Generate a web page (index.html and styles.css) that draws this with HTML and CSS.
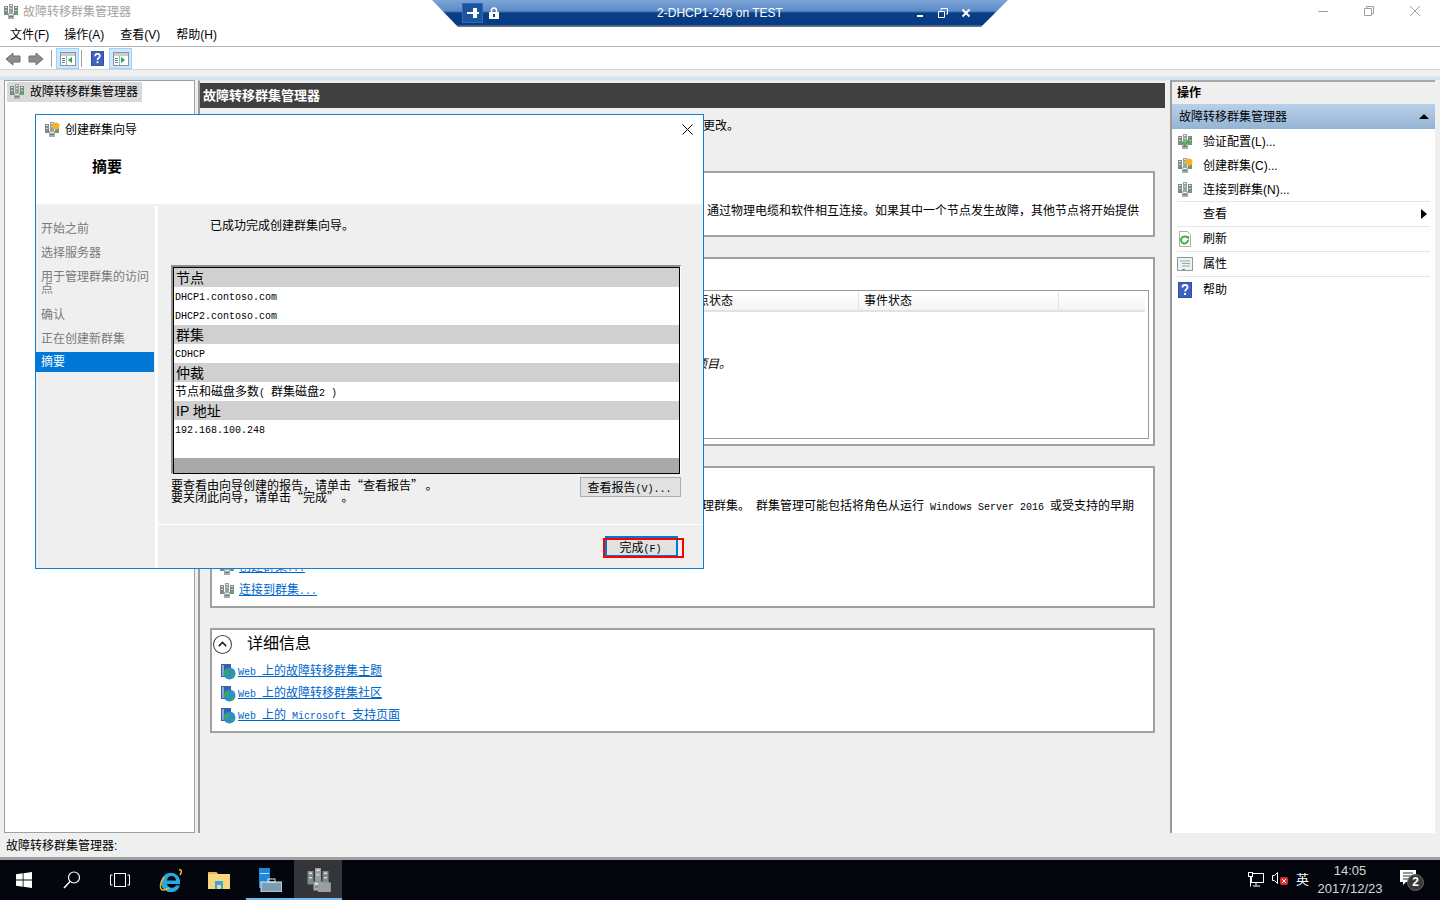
FILE: index.html
```html
<!DOCTYPE html>
<html lang="zh-CN">
<head>
<meta charset="utf-8">
<title>故障转移群集管理器</title>
<link rel="stylesheet" href="styles.css">
</head>
<body>
<svg class="defs" width="0" height="0">
  <symbol id="srv" viewBox="0 0 16 16">
    <rect x="1" y="2" width="4" height="9" fill="#7f8b88"/><rect x="6" y="0" width="4" height="9" fill="#97a29f"/><rect x="11" y="2" width="4" height="9" fill="#7f8b88"/>
    <rect x="2" y="3" width="2" height="1" fill="#dfe5e3"/><rect x="7" y="1" width="2" height="1" fill="#e8ecea"/><rect x="12" y="3" width="2" height="1" fill="#dfe5e3"/>
    <rect x="2" y="6" width="2" height="1" fill="#cfd6d3"/><rect x="7" y="4" width="2" height="1" fill="#cfd6d3"/><rect x="12" y="6" width="2" height="1" fill="#cfd6d3"/>
    <rect x="5" y="9" width="6" height="6" fill="#a5aead"/><rect x="6" y="10" width="4" height="1" fill="#e8ecea"/><rect x="6" y="12" width="4" height="1" fill="#6f7a78"/>
    <rect x="13" y="9" width="2" height="2" fill="#44c040"/><rect x="3" y="9" width="1" height="1" fill="#44c040"/>
  </symbol>
  <symbol id="globe" viewBox="0 0 16 16">
    <rect x="1" y="0" width="10" height="13" fill="#3a5fa8"/><rect x="2" y="1" width="2" height="11" fill="#8fa9d8"/>
    <circle cx="9.5" cy="9.5" r="6" fill="#2a8fd0"/><path d="M6 6c2-1 3 0 3 2s-2 2-3 3l-2-1c0-2 1-3 2-4zM11 11l3-1c0 2-1 4-3 5z" fill="#3cab3c"/>
  </symbol>
  <symbol id="help" viewBox="0 0 14 16">
    <rect x="0" y="0" width="14" height="16" fill="#2b4ea6"/><rect x="1" y="1" width="12" height="14" fill="#3f63bd"/>
    <path d="M4.500 5.500C4.500 3.800 5.600 3 7 3s2.500 .9 2.500 2.300c0 2-2.500 2.200-2.500 4.200" fill="none" stroke="#fff" stroke-width="1.800"/><rect x="6" y="11" width="2" height="2" fill="#fff"/>
  </symbol>
  <symbol id="pane" viewBox="0 0 16 14">
    <rect x=".5" y=".5" width="15" height="13" fill="#fff" stroke="#8a9499"/><rect x="1" y="1" width="14" height="3" fill="#c9d0d4"/>
    <rect x="2" y="6" width="3" height="1" fill="#5b7fa8"/><rect x="2" y="8" width="3" height="1" fill="#5b7fa8"/><rect x="2" y="10" width="3" height="1" fill="#5b7fa8"/><rect x="6" y="4" width="1" height="9" fill="#a8b2b8"/>
  </symbol>
</svg>

<header class="titlebar">
  <svg class="ico16"><use href="#srv"/></svg>
  <span class="app-title">故障转移群集管理器</span>
  <div class="win-controls">
    <svg width="12" height="12" viewBox="0 0 12 12"><path d="M1 6.500h10" stroke="#a0a0a0"/></svg>
    <svg width="12" height="12" viewBox="0 0 12 12"><path d="M3.500 3.500V1.500h7v7h-2M1.500 3.500h7v7h-7z" stroke="#a0a0a0" fill="none"/></svg>
    <svg width="12" height="12" viewBox="0 0 12 12"><path d="M1 1l10 10M11 1L1 11" stroke="#a0a0a0"/></svg>
  </div>
</header>

<div class="rdp-bar">
  <div class="rdp-left">
    <span class="rdp-pin"><svg width="12" height="10" viewBox="0 0 12 10"><path d="M0 5h7M7 1h2v8H7zM9 5h3" stroke="#fff" stroke-width="2" fill="none"/></svg></span>
    <svg width="10" height="12" viewBox="0 0 10 12"><path d="M2.500 6V3.500a2.500 2.500 0 0 1 5 0V6" stroke="#fff" stroke-width="1.500" fill="none"/><rect y="5" width="10" height="7" fill="#fff"/><rect x="4" y="7" width="2" height="3" fill="#0a3f86"/></svg>
  </div>
  <span class="rdp-name">2-DHCP1-246 on TEST</span>
  <div class="rdp-right">
    <svg width="10" height="10" viewBox="0 0 10 10"><rect x="2" y="7" width="6" height="2" fill="#fff"/></svg>
    <svg width="10" height="10" viewBox="0 0 10 10"><path d="M3 2.500V.5h6.500v5.500H8M.5 3.500h6v6h-6z" fill="none" stroke="#fff"/></svg>
    <svg width="10" height="10" viewBox="0 0 10 10"><path d="M1.500 1.500l7 7M8.500 1.500l-7 7" stroke="#fff" stroke-width="2"/></svg>
  </div>
</div>

<nav class="menubar">
  <span>文件(F)</span><span>操作(A)</span><span>查看(V)</span><span>帮助(H)</span>
</nav>

<div class="toolbar">
  <svg class="tool-arrow" viewBox="0 0 16 14"><path d="M1 7l7-6v3h7v6H8v3z" fill="#8d8d8d" stroke="#6f6f6f"/></svg>
  <svg class="tool-arrow" viewBox="0 0 16 14"><path d="M15 7L8 1v3H1v6h7v3z" fill="#8d8d8d" stroke="#6f6f6f"/></svg>
  <i class="tool-sep"></i>
  <span class="tool-btn"><svg width="16" height="14"><use href="#pane"/><path d="M12 5v6l-4-3z" fill="#1fae3a"/></svg></span>
  <i class="tool-sep"></i>
  <svg class="tool-help"><use href="#help"/></svg>
  <span class="tool-btn"><svg width="16" height="14"><use href="#pane"/><path d="M8 5v6l4-3z" fill="#1fae3a"/></svg></span>
</div>
<div class="strip"></div>

<main class="workspace">
  <aside class="tree">
    <div class="tree-item"><svg class="ico16"><use href="#srv"/></svg><span>故障转移群集管理器</span></div>
  </aside>

  <section class="center">
    <h1 class="center-head">故障转移群集管理器</h1>
    <div class="center-body">
      <p class="intro">更改。</p>
      <div class="box box-1"><p class="b1-text">通过物理电缆和软件相互连接。如果其中一个节点发生故障，其他节点将开始提供</p></div>
      <div class="box box-2">
        <div class="table">
          <div class="thead">
            <span class="th th-a">节点状态</span>
            <span class="th th-b">事件状态</span>
            <span class="th th-c"></span>
          </div>
          <p class="empty">项目。</p>
        </div>
      </div>
      <div class="box box-3">
        <p class="b3-text">理群集。&ensp;群集管理可能包括将角色从运行<span class="mono"> Windows Server 2016 </span>或受支持的早期</p>
        <div class="actions">
          <a class="link-row"><svg class="ico16"><use href="#srv"/></svg><span class="link">创建群集<span class="mono">...</span></span></a>
          <a class="link-row"><svg class="ico16"><use href="#srv"/></svg><span class="link">连接到群集<span class="mono">...</span></span></a>
        </div>
      </div>
      <div class="box box-4">
        <div class="box-head">
          <svg width="19" height="19" viewBox="0 0 18 18"><circle cx="9" cy="9" r="8.500" fill="#fff" stroke="#444"/><path d="M5.500 10.500L9 7l3.500 3.500" fill="none" stroke="#222" stroke-width="1.500"/></svg>
          <span>详细信息</span>
        </div>
        <a class="web-row"><svg class="ico16"><use href="#globe"/></svg><span class="link"><span class="mono">Web </span>上的故障转移群集主题</span></a>
        <a class="web-row"><svg class="ico16"><use href="#globe"/></svg><span class="link"><span class="mono">Web </span>上的故障转移群集社区</span></a>
        <a class="web-row"><svg class="ico16"><use href="#globe"/></svg><span class="link"><span class="mono">Web </span>上的<span class="mono"> Microsoft </span>支持页面</span></a>
      </div>
    </div>
  </section>

  <aside class="actions-pane">
    <div class="ap-title">操作</div>
    <div class="ap-group"><span>故障转移群集管理器</span><svg width="10" height="5" viewBox="0 0 10 5"><path d="M5 0l5 5H0z" fill="#000"/></svg></div>
    <div class="ap-row first">
      <svg class="ico16"><use href="#srv"/><path d="M5 8l3 3 6-8" fill="none" stroke="#3cb43c" stroke-width="2"/></svg><span>验证配置(L)...</span>
    </div>
    <div class="ap-row tight">
      <svg class="ico16"><use href="#srv"/><circle cx="12" cy="4" r="3.500" fill="#f5b324"/></svg><span>创建群集(C)...</span>
    </div>
    <div class="ap-row tight sep">
      <svg class="ico16"><use href="#srv"/></svg><span>连接到群集(N)...</span>
    </div>
    <div class="ap-row sep">
      <i class="ico-blank"></i><span>查看</span><svg class="ap-more" width="6" height="10" viewBox="0 0 6 10"><path d="M0 0l6 5-6 5z" fill="#000"/></svg>
    </div>
    <div class="ap-row sep">
      <svg class="ico16" viewBox="0 0 16 16"><path d="M2.500 .5h8l3 3v12h-11z" fill="#fff" stroke="#a9b0ae"/><path d="M11 9a3.500 3.500 0 1 1-1-2.500" fill="none" stroke="#3eb23e" stroke-width="2"/><path d="M8 5h4v4z" fill="#3eb23e"/></svg><span>刷新</span>
    </div>
    <div class="ap-row sep">
      <svg class="ico16" viewBox="0 0 16 16"><rect x=".5" y="1.500" width="15" height="13" fill="#eef1f2" stroke="#8f9799"/><path d="M3 5h10M5 7.500h8M5 10h8" stroke="#9aa4a8"/><rect x="5" y="13" width="3" height="1" fill="#2aa4e0"/></svg><span>属性</span>
    </div>
    <div class="ap-row">
      <svg class="ico16" viewBox="0 0 14 16"><use href="#help"/></svg><span>帮助</span>
    </div>
  </aside>
</main>

<div class="statusbar">故障转移群集管理器:</div>

<footer class="taskbar">
  <span class="tile"><svg width="16" height="16" viewBox="0 0 16 16"><path d="M0 2.300l6.700-1v6.300H0zM7.500 1.200L16 0v7.600H7.500zM0 8.400h6.700v6.300L0 13.700zM7.500 8.400H16V16l-8.500-1.200z" fill="#fff"/></svg></span>
  <span class="tile"><svg width="18" height="18" viewBox="0 0 18 18"><circle cx="11" cy="6.500" r="5.500" fill="none" stroke="#fff" stroke-width="1.200"/><path d="M7 10.500L1 17" stroke="#fff" stroke-width="1.500"/></svg></span>
  <span class="tile"><svg width="20" height="14" viewBox="0 0 20 14"><rect x="4.500" y=".5" width="11" height="13" fill="none" stroke="#fff"/><path d="M2.500 2H.5v10h2M17.500 2h2v10h-2" fill="none" stroke="#fff"/></svg></span>
  <span class="tile ml3"><svg width="24" height="24" viewBox="0 0 24 24"><path d="M21 16h-13a5 5 0 0 0 9 1.500h4A9.500 9.500 0 0 1 2.500 12 9.500 9.500 0 0 1 21 12zM8 12.500h9a4.500 4.500 0 0 0-9 0z" fill="#29a8e0"/><path d="M20 2c3-1 3 2 1 5M5 9C1 14 0 22 4 22c2 0 4-1 6-2" fill="none" stroke="#e9b92c" stroke-width="1.500"/></svg></span>
  <span class="tile"><svg width="22" height="18" viewBox="0 0 22 18"><path d="M0 1h8l2 2h12v15H0z" fill="#f4d77f"/><path d="M0 1h8l2 2H0z" fill="#e4b94c"/><path d="M7 10h8v8h-2v-4H9v4H7z" fill="#3aa4dc"/></svg></span>
  <span class="tile tile-open ml3"><svg width="24" height="24" viewBox="0 0 24 24"><rect x="1" y="0" width="11" height="20" fill="#1e88d8"/><rect x="2" y="5" width="9" height="1" fill="#bfe0f7"/><rect x="3" y="14" width="21" height="10" fill="#7f9db0" stroke="#dfe8ee"/><rect x="10" y="11" width="7" height="3" fill="none" stroke="#dfe8ee"/></svg></span>
  <span class="tile tile-active"><svg width="26" height="24" viewBox="0 0 16 15"><use href="#srv"/><rect x="8" y="9" width="8" height="6" fill="#9a9fa3"/></svg></span>
  <div class="tray">
    <svg width="16" height="16" viewBox="0 0 16 16"><rect x="3.500" y="1.500" width="12" height="9" fill="none" stroke="#fff"/><path d="M8 10.500v3M5 14h7" stroke="#fff"/><rect x=".5" y=".5" width="4" height="4" fill="#050810" stroke="#fff"/><path d="M2.500 4.500v10" stroke="#fff"/></svg>
    <span class="sound"><svg width="16" height="16" viewBox="0 0 16 16"><path d="M.5 5.500h2l3-3v11l-3-3h-2z" fill="none" stroke="#fff"/><rect x="8" y="7" width="8" height="8" rx="2" fill="#e02b2b"/><path d="M10 9l4 4M14 9l-4 4" stroke="#fff"/></svg></span>
    <span class="ime">英</span>
    <div class="clock"><span>14:05</span><span>2017/12/23</span></div>
    <span class="notify">
      <svg width="16" height="16" viewBox="0 0 16 16"><path d="M0 0h16v12H6l-3 3v-3H0z" fill="#fff"/><path d="M3 3h10M3 6h10M3 9h7" stroke="#333"/></svg>
      <b class="badge">2</b>
    </span>
  </div>
</footer>

<div class="dialog">
  <div class="dlg-head">
    <div class="dlg-title">
      <svg class="ico16"><use href="#srv"/><circle cx="12" cy="4" r="3.500" fill="#f5b324"/></svg>
      <span>创建群集向导</span>
      <svg class="dlg-close" width="11" height="11" viewBox="0 0 11 11"><path d="M.5 .5l10 10M10.500 .5l-10 10" stroke="#000"/></svg>
    </div>
    <h2 class="dlg-heading">摘要</h2>
  </div>
  <div class="dlg-body">
    <ul class="dlg-nav">
      <li>开始之前</li>
      <li>选择服务器</li>
      <li class="wrap">用于管理群集的访问点</li>
      <li>确认</li>
      <li>正在创建新群集</li>
      <li class="current">摘要</li>
    </ul>
    <div class="dlg-pane">
      <div class="dlg-main">
        <p class="done">已成功完成创建群集向导。</p>
        <div class="report">
          <div class="report-inner">
            <div class="r-head">节点</div>
            <div class="r-row mono">DHCP1.contoso.com</div>
            <div class="r-row mono">DHCP2.contoso.com</div>
            <div class="r-head">群集</div>
            <div class="r-row mono">CDHCP</div>
            <div class="r-head">仲裁</div>
            <div class="r-row">节点和磁盘多数<span class="mono">( </span>群集磁盘<span class="mono">2 )</span></div>
            <div class="r-head">IP 地址</div>
            <div class="r-row r-last mono">192.168.100.248</div>
            <div class="r-foot"></div>
          </div>
        </div>
        <div class="hint-row">
          <p class="hint">要查看由向导创建的报告，请单击“查看报告”&thinsp;。<br>要关闭此向导，请单击“完成”&thinsp;。</p>
          <button class="btn-report">查看报告<span class="mono">(V)...</span></button>
        </div>
      </div>
      <div class="dlg-foot">
        <button class="btn-finish">完成<span class="mono">(F)</span></button>
        <i class="red-mark"></i>
      </div>
    </div>
  </div>
</div>
</body>
</html>
```

FILE: styles.css
```css
* { box-sizing: border-box; }
html, body { margin: 0; padding: 0; }
body {
  width: 1440px; height: 900px; overflow: hidden; position: relative;
  display: flex; flex-direction: column;
  background: #efefef; color: #000;
  font: 12px/16px "Liberation Sans", "Noto Sans CJK SC", sans-serif;
}
p, h1, h2, ul { margin: 0; padding: 0; }
.defs { position: absolute; }
.ico16 { width: 16px; height: 16px; flex: none; }
.mono { font-family: "Liberation Mono", "Noto Sans CJK SC", monospace; font-size: 10px; }

.titlebar { height: 24px; background: #fff; display: flex; align-items: center; padding: 0 0 0 3px; }
.app-title { margin-left: 4px; color: #a3a3a3; }
.win-controls { margin-left: auto; display: flex; gap: 34px; padding-right: 19px; margin-bottom: 3px; }

.rdp-bar {
  position: absolute; left: 432px; top: 0; width: 576px; height: 27px;
  clip-path: polygon(0 0, 100% 0, 549px 100%, 26px 100%);
  background: linear-gradient(#7ca4d6 0, #5b8cc9 11px, #0a3f86 13px, #063a84 25px, #7a8aa0 26px, #555 27px);
  display: flex; align-items: center; color: #fff; padding: 0 37px 2px 30px;
}
.rdp-left { display: flex; align-items: center; gap: 6px; width: 60px; }
.rdp-pin { width: 21px; height: 20px; display: flex; align-items: center; justify-content: center; background: #1a559e; border: 1px solid #2c6cb8; }
.rdp-name { flex: 1; text-align: center; padding-left: 3px; }
.rdp-right { display: flex; gap: 13px; align-items: center; }

.menubar { height: 23px; background: #fff; border-bottom: 1px solid #b4b4b4; display: flex; gap: 16px; padding: 3px 0 0 10px; }
.menubar span:first-child { margin-right: -1px; }

.toolbar { height: 23px; background: #fff; border-bottom: 1px solid #d4d4d4; display: flex; align-items: center; padding: 1px 0 0 5px; }
.tool-arrow { width: 16px; height: 14px; margin-right: 7px; }
.tool-sep { width: 1px; height: 17px; background: #a0a0a0; margin: 0 4px 0 0; }
.tool-btn { width: 23px; height: 21px; display: flex; align-items: center; justify-content: center; background: #cce8ff; border: 1px solid #99d1ff; margin-right: 2px; }
.tool-help { width: 13px; height: 15px; margin: 0 5px 0 5px; }

.strip { height: 10px; background: linear-gradient(#efefef 0, #efefef 6px, #d6e2ef 7px, #d6e2ef 10px); }

.workspace { height: 753px; display: flex; padding-left: 4px; }
.tree { width: 191px; background: #fff; border: 1px solid #a0a0a0; padding: 1px 2px; }
.tree-item { width: 135px; height: 20px; background: #d9d9d9; display: flex; align-items: center; gap: 5px; padding-left: 2px; }

.center { width: 967px; margin-left: 3px; border-left: 2px solid #9a9a9a; display: flex; flex-direction: column; padding-top: 2px; border-top: 1px solid #dfe6ee; }
.center-head { height: 25px; background: #404040; color: #fff; font-size: 13px; font-weight: 700; line-height: 25px; padding-left: 3px; flex: none; }
.center-body { flex: 1; padding-left: 10px; background: #efefef; }
.intro { height: 63px; line-height: 36px; padding-left: 493px; }
.box { width: 945px; background: #fff; border: 2px solid #a0a0a0; margin-bottom: 20px; }
.box-1 { height: 66px; padding: 30px 0 0 495px; }
.b1-text { white-space: nowrap; }
.box-2 { height: 189px; padding: 31px 4px 0 7px; }
.table { height: 149px; border: 1px solid #9a9aa5; border-left: 0; }
.thead { height: 21px; display: flex; padding-right: 3px; line-height: 21px; }
.th { background: linear-gradient(#fff, #f5f5f5); border-bottom: 2px solid #e2e2e2; }
.th-a { width: 640px; padding-left: 466px; border-right: 1px solid #e2e2e2; }
.th-b { width: 200px; padding-left: 5px; border-right: 1px solid #e2e2e2; }
.th-c { flex: 1; }
.empty { font-style: italic; padding: 44px 0 0 476px; }
.box-3 { height: 142px; padding: 30px 0 0 490px; position: relative; }
.b3-text { white-space: nowrap; }
.actions { margin: 40px 0 0 -483px; }
.link-row { display: flex; align-items: center; height: 23px; gap: 4px; }
.link { color: #0066cc; text-decoration: underline; white-space: nowrap; }
.box-4 { height: 105px; margin-bottom: 0; padding: 2px 0 0 8px; }
.box-head { height: 24px; display: flex; align-items: center; gap: 15px; font-size: 16px; margin: 0 0 5px -7px; }
.web-row { display: flex; align-items: center; height: 22px; gap: 2px; }

.actions-pane { width: 265px; margin-left: 5px; border-left: 2px solid #9a9a9a; background: #fff; border-top: 2px solid #a8a8a8; }
.ap-title { height: 22px; background: #efefef; font-weight: 700; line-height: 23px; padding-left: 5px; }
.ap-group { height: 25px; background: linear-gradient(#b8d0e8, #94b4d4); display: flex; align-items: center; justify-content: space-between; padding: 0 6px 0 7px; }
.ap-row { height: 25px; display: flex; align-items: center; gap: 10px; margin: 0 5px 0 5px; }
.ap-row.tight { height: 24px; }
.ap-row.sep { border-bottom: 1px solid #e6e6e6; }
.ico-blank { width: 16px; flex: none; }
.ap-more { margin-left: auto; margin-right: 3px; }

.statusbar { height: 27px; background: #efefef; border-bottom: 3px solid #a0a0a0; padding: 5px 0 0 6px; }

.taskbar { height: 40px; background: #04060e; display: flex; align-items: center; color: #fff; }
.tile { width: 48px; height: 40px; display: flex; align-items: center; justify-content: center; flex: none; }
.ml3 { margin-left: 3px; }
.tile-open { box-shadow: inset 0 -2px 0 #76b9ed; }
.tile-active { background: #33353a; box-shadow: inset 0 -2px 0 #76b9ed; }
.tray { margin-left: auto; display: flex; align-items: center; }
.sound { margin-left: 8px; }
.ime { margin-left: 8px; font-size: 13px; width: 14px; }
.clock { width: 80px; display: flex; flex-direction: column; align-items: center; line-height: 18px; font-size: 13px; color: #d8d8d8; }
.notify { position: relative; width: 50px; height: 24px; padding: 2px 0 0 10px; }
.badge { position: absolute; left: 17px; top: 6px; width: 17px; height: 17px; line-height: 15px; border-radius: 50%; background: #3a3a3a; border: 1px solid #666; text-align: center; font-size: 12px; color: #fff; }

.dialog {
  position: absolute; left: 35px; top: 114px; width: 669px; height: 455px;
  border: 1px solid #0f7fd8; background: #efefef;
  display: flex; flex-direction: column;
}
.dlg-head { height: 91px; background: #fff; border-bottom: 2px solid #f1f1f1; flex: none; }
.dlg-title { height: 30px; display: flex; align-items: center; gap: 5px; padding: 0 10px 0 8px; }
.dlg-close { margin-left: auto; margin-bottom: 2px; }
.dlg-heading { font-size: 15px; font-weight: 700; line-height: 20px; margin: 12px 0 0 56px; }
.dlg-body { flex: 1; display: flex; }
.dlg-nav { width: 122px; list-style: none; padding-top: 11px; border-right: 3px solid #fff; color: #7a7a7a; flex: none; }
.dlg-nav li { height: 24px; line-height: 24px; padding-left: 5px; }
.dlg-nav li.wrap { height: 38px; line-height: 12px; padding: 6px 5px 0 5px; }
.dlg-nav li.current { height: 20px; line-height: 21px; margin-top: 1px; background: #0078d7; color: #fff; width: 118px; }
.dlg-pane { flex: 1; display: flex; flex-direction: column; }
.dlg-main { height: 319px; padding: 12px 22px 0 13px; border-bottom: 1px solid #fff; flex: none; }
.done { padding-left: 39px; height: 47px; }
.report { height: 209px; border-top: 2px solid #8f8f8f; border-left: 2px solid #8f8f8f; border-right: 1px solid #fff; border-bottom: 1px solid #fff; }
.report-inner { height: 207px; border: 1px solid #000; background: #fff; display: flex; flex-direction: column; }
.r-head { height: 19px; line-height: 21px; background: #d0d0d0; font-size: 14px; padding-left: 2px; flex: none; overflow: hidden; }
.r-row { height: 19px; line-height: 21px; padding-left: 1px; flex: none; }
.r-last { height: 38px; }
.r-foot { flex: 1; background: #a9a9a9; }
.hint-row { display: flex; justify-content: space-between; margin-top: 3px; }
.hint { line-height: 12px; padding-top: 2px; font-family: "Noto Sans CJK SC", sans-serif; }
button { font: inherit; color: #000; padding: 0; }
.btn-report { width: 101px; height: 20px; background: #e1e1e1; border: 1px solid #adadad; padding: 2px 2px 0 0; }
.dlg-foot { flex: 1; position: relative; display: flex; justify-content: flex-end; padding: 11px 25px 0 0; align-items: flex-start; }
.btn-finish { width: 73px; height: 21px; background: #e1e1e1; border: 2px solid #0078d7; padding: 2px 2px 0 0; }
.red-mark { position: absolute; left: 445px; top: 13px; width: 81px; height: 20px; border: 2px solid #ff0000; }
```
